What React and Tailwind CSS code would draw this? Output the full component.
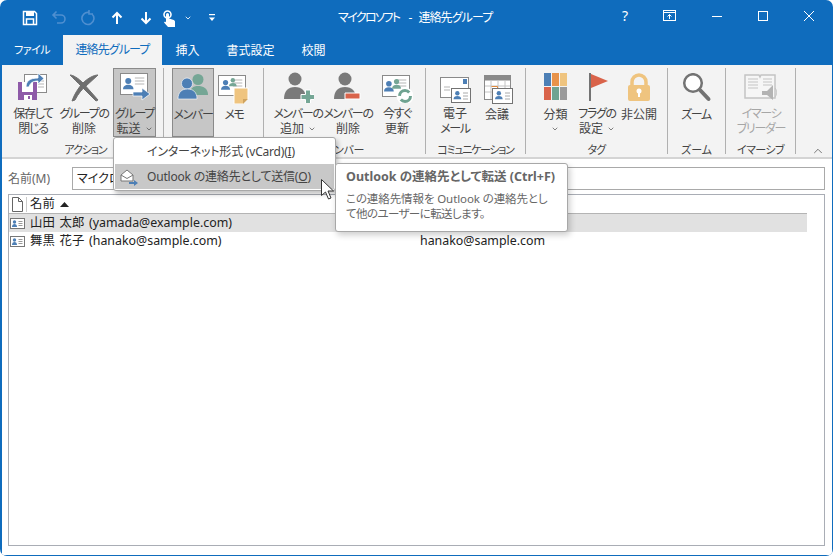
import { ChevronDown, ChevronUp } from 'lucide-react';

const FONT = "[font-family:'Noto_Sans','Noto_Sans_CJK_JP',sans-serif] [font-feature-settings:'palt']";
const KANJI_ONLY = /^[\u4e00-\u9fff]+$/;

function Person({ x, y, s = 1, fill = '#4d7fb5' }) {
  return (
    <g transform={`translate(${x} ${y}) scale(${s})`} fill={fill}>
      <circle cx="7" cy="4" r="4" />
      <path d="M0 15c0-4 3-6 7-6s7 2 7 6z" />
    </g>
  );
}

function SaveCloseIcon() {
  return (
    <svg width="32" height="30" viewBox="0 0 32 30">
      <rect x="7.500" y="1.500" width="22" height="18" fill="#fff" stroke="#8a8a8a" />
      <path d="M21 8h6M21 11h6M21 14h6" stroke="#b5b5b5" />
      <path d="M1 9h19v18H1z" fill="#8e5aa8" />
      <rect x="5" y="9" width="11" height="10" fill="#fff" />
      <rect x="7" y="22" width="8" height="5" fill="#fff" />
      <rect x="11" y="23" width="2" height="3" fill="#8e5aa8" />
      <path d="M9 14c0-6 4-9 12-9V0l6 5.500-6 5.500V8c-5 0-8 2-9 6z" fill="#4d7fb5" stroke="#fff" strokeWidth=".8" />
    </svg>
  );
}

function DeleteIcon() {
  return (
    <svg width="32" height="30" viewBox="0 0 32 30">
      <path d="M2 2c3 0 8 3 13 8l15 17-2 1-14-14C9 9 5 5 2 2z" fill="#6e6e6e" stroke="#6e6e6e" />
      <path d="M30 2c-4 0-10 3-15 8C10 15 6 22 4 28l3-1c3-6 7-11 11-14 4-4 8-7 12-11z" fill="#6e6e6e" stroke="#6e6e6e" />
    </svg>
  );
}

function Card({ x = 0, y = 0, w = 26, h = 21 }) {
  return (
    <g transform={`translate(${x} ${y})`}>
      <rect x=".5" y=".5" width={w} height={h} fill="#fff" stroke="#8a8a8a" />
      <path d={`M${w * 0.55} 5h${w * 0.35}M${w * 0.55} 8h${w * 0.35}M${w * 0.55} 11h${w * 0.35}`} stroke="#b5b5b5" />
    </g>
  );
}

function ForwardIcon() {
  return (
    <svg width="32" height="31" viewBox="0 0 32 31">
      <Card x="1" y="1" w="27" h="21" />
      <Person x="4" y="6" s="0.75" />
      <path d="M14 20h9v-4l8 6-8 6v-4h-9z" fill="#4d7fb5" stroke="#fff" strokeWidth=".7" />
    </svg>
  );
}

function MembersIcon() {
  return (
    <svg width="32" height="30" viewBox="0 0 32 30">
      <circle cx="21" cy="6.500" r="5.500" fill="#75a695" />
      <path d="M13 22c0-7 3-9 8-9s10 2 10 9z" fill="#75a695" />
      <circle cx="10" cy="10.500" r="5.500" fill="#4d7fb5" stroke="#fff" strokeWidth=".6" />
      <path d="M1 26c0-7 4-10 9.500-10S20 19 20 26z" fill="#4d7fb5" stroke="#fff" strokeWidth=".6" />
    </svg>
  );
}

function MemoIcon() {
  return (
    <svg width="32" height="31" viewBox="0 0 32 31">
      <Card x="0" y="2" w="27" h="20" />
      <Person x="3" y="7" s="0.65" />
      <Person x="11" y="5" s="0.55" fill="#75a695" />
      <path d="M16 15h14v11l-5 5h-9z" fill="#efc47f" stroke="#fff" />
      <path d="M25 31v-5h5z" fill="#cfa35f" />
    </svg>
  );
}

function MemberEditIcon({ minus }) {
  return (
    <svg width="32" height="31" viewBox="0 0 32 31">
      <circle cx="13" cy="7" r="6.500" fill="#7a7a7a" />
      <path d="M2 27c0-8 4-12 11-12s11 4 11 12z" fill="#7a7a7a" />
      {minus ? (
        <path d="M13 21h15v6H13z" fill="#d9634a" stroke="#fff" />
      ) : (
        <path d="M23.500 18h5v4.500H33v5h-4.500V32h-5v-4.500H19v-5h4.500z" fill="#75a695" stroke="#fff" />
      )}
    </svg>
  );
}

function RefreshIcon() {
  return (
    <svg width="32" height="30" viewBox="0 0 32 30">
      <Card x="1" y="2" w="27" h="21" />
      <Person x="3" y="8" s="0.7" />
      <Person x="11" y="6" s="0.65" fill="#75a695" />
      <circle cx="24" cy="23" r="8.500" fill="#fff" />
      <circle cx="24" cy="23" r="5.500" fill="none" stroke="#6fa391" strokeWidth="3" strokeDasharray="13 4" />
    </svg>
  );
}

function MailCardIcon() {
  return (
    <svg width="33" height="31" viewBox="0 0 33 31">
      <rect x="1.500" y="5.500" width="28" height="20" fill="#fff" stroke="#8a8a8a" />
      <rect x="24" y="7" width="4" height="5" fill="#4d7fb5" />
      <path d="M5 15h6M5 18h6" stroke="#b5b5b5" />
      <rect x="12.500" y="16.500" width="19" height="14" fill="#fff" stroke="#737373" />
      <Person x="14.500" y="19" s="0.55" />
      <path d="M24 21h5M24 24h5M24 27h5" stroke="#aaa" />
    </svg>
  );
}

function MeetingCardIcon() {
  return (
    <svg width="32" height="31" viewBox="0 0 32 31">
      <rect x="3.500" y="2.500" width="26" height="24" fill="#fff" stroke="#8a8a8a" />
      <rect x="3.500" y="2.500" width="26" height="5" fill="#8a8a8a" />
      <path d="M10 7v19M17 7v19M24 7v19M4 13h25M4 19h25" stroke="#c4c4c4" />
      <path d="M10.500 13.500h6v6" fill="none" stroke="#e08b3e" />
      <rect x="11.500" y="15.500" width="20" height="15" fill="#fff" stroke="#737373" />
      <Person x="14" y="18" s="0.55" />
      <path d="M24 20h5M24 23h5M24 26h5" stroke="#aaa" />
    </svg>
  );
}

function CategoryIcon() {
  const colors = ['#4d7fb5', '#e8934a', '#efc47f', '#d9634a', '#6fa391', '#9a9a9a'];
  return (
    <div className="mb-[3px] grid w-[23px] grid-cols-3 gap-[1px]">
      {colors.map((c) => (
        <div key={c} className="h-[13px]" style={{ background: c }} />
      ))}
    </div>
  );
}

function FlagIcon() {
  return (
    <svg width="32" height="30" viewBox="0 0 32 30">
      <rect x="8" y="0" width="2" height="28" fill="#737373" />
      <path d="M10 1l17 7-17 7z" fill="#d9634a" />
    </svg>
  );
}

function LockIcon() {
  return (
    <svg width="32" height="30" viewBox="0 0 32 30">
      <path d="M9 13V9a7 7 0 0 1 14 0v4" fill="none" stroke="#efc47f" strokeWidth="3.500" />
      <rect x="5" y="12" width="22" height="16" rx="2" fill="#efc47f" />
      <circle cx="16" cy="18" r="2.500" fill="#fff" />
      <rect x="15" y="18" width="2" height="6" fill="#fff" />
    </svg>
  );
}

function ZoomIcon() {
  return (
    <svg width="32" height="30" viewBox="0 0 32 30">
      <circle cx="13" cy="10" r="8.800" fill="#fff" stroke="#737373" strokeWidth="2.500" />
      <path d="M20 17l8.500 9" stroke="#737373" strokeWidth="4" strokeLinecap="round" />
    </svg>
  );
}

function ReaderIcon() {
  return (
    <svg width="34" height="30" viewBox="0 0 34 30">
      <path d="M1 2h14l1 2 1-2h14v23H1z" fill="#f6f6f6" stroke="#c4c4c4" strokeWidth="1.500" />
      <path d="M4 6h10M4 9h10M4 12h10M4 15h10M19 6h9M19 9h9M19 12h9" stroke="#c4c4c4" />
      <path d="M18 18h5l6-6v15l-6-5h-5z" fill="#b3b3b3" />
      <path d="M31 15c2 2 2 7 0 9" fill="none" stroke="#c4c4c4" />
    </svg>
  );
}

function RibbonButton({ width, ml = 0, active, icon, lines, chevron, disabled }) {
  return (
    <div
      className={`flex h-[69px] flex-none flex-col items-center pt-[3px] text-[12px] leading-[15px] ${
        active ? 'border border-[#8a8a8a] bg-[#c6c6c6]' : 'border border-transparent'
      } ${disabled ? 'text-[#a6a6a6]' : 'text-[#444]'}`}
      style={{ width, marginLeft: ml }}
    >
      <div className="flex h-[32px] items-center justify-center">{icon}</div>
      <div className="mt-[3px] flex flex-col items-center whitespace-nowrap">
        {lines.map((line, i) => (
          <span key={line} className={`flex items-center ${KANJI_ONLY.test(line) ? '' : 'tracking-[-1.3px]'}`}>
            {line}
            {chevron && lines.length > 1 && i === lines.length - 1 && <ChevronDown size={8} className="ml-[4px]" />}
          </span>
        ))}
        {chevron && lines.length === 1 && <ChevronDown size={8} className="mt-[3px]" />}
      </div>
    </div>
  );
}

function RibbonGroup({ width, label, pl = 0, tracking = -0.8, children }) {
  return (
    <div className="flex h-[86px] flex-none flex-col border-r border-[#b0b0b0]" style={{ width }}>
      <div className="flex h-[69px]" style={{ paddingLeft: pl }}>
        {children}
      </div>
      <div
        className="flex h-[17px] justify-center whitespace-nowrap pt-[5px] text-[11px] leading-[16px] text-[#444]"
        style={{ letterSpacing: tracking }}
      >
        {label}
      </div>
    </div>
  );
}

function TitleIcons() {
  return (
    <div className="flex w-[338px] flex-none items-center pl-[22px]">
      <svg width="16" height="16" viewBox="0 0 16 16" fill="none" className="mr-[13px]">
        <path d="M1.500 1.500h11l2 2v11h-13z" stroke="#fff" strokeWidth="1.500" />
        <path d="M4 2v4h8V2z" fill="#fff" />
        <path d="M4.500 14v-5h7v5" stroke="#fff" strokeWidth="1.500" />
      </svg>
      <svg width="16" height="16" viewBox="0 0 16 16" fill="none" className="mr-[13px]">
        <path d="M2 5h8a4 4 0 0 1 0 8H6M5.500 1.500L2 5l3.500 3.500" stroke="#4f8fd0" strokeWidth="1.600" />
      </svg>
      <svg width="16" height="16" viewBox="0 0 16 16" fill="none" className="mr-[14px]">
        <path d="M12 4a6 6 0 1 1-3-1.500M9 0v4h4" stroke="#4f8fd0" strokeWidth="1.600" />
      </svg>
      <svg width="14" height="14" viewBox="0 0 14 14" fill="none" className="mr-[15px]">
        <path d="M7 13V2M2.500 6.500L7 2l4.500 4.500" stroke="#fff" strokeWidth="2" />
      </svg>
      <svg width="14" height="14" viewBox="0 0 14 14" fill="none" className="mr-[10px]">
        <path d="M7 1v11M2.500 7.500L7 12l4.500-4.500" stroke="#fff" strokeWidth="2" />
      </svg>
      <svg width="12" height="17" viewBox="0 0 12 17" className="mr-[9px]">
        <circle cx="4.500" cy="4.500" r="3.500" fill="none" stroke="#fff" strokeWidth="1.600" />
        <path d="M3 4.500a1.500 1.500 0 0 1 3 0v4l4 1.200c1 .3 2 1 2 2V17H5L1 12.500l1-1 1 .7z" fill="#fff" />
      </svg>
      <ChevronDown size={8} color="#fff" strokeWidth={2.500} className="mr-[16px]" />
      <svg width="8" height="8" viewBox="0 0 8 8" fill="#fff">
        <rect x="1" y="0" width="6" height="1.200" />
        <path d="M1 3.500h6L4 7z" />
      </svg>
    </div>
  );
}

function WindowControls() {
  return (
    <div className="-mt-[4px] flex flex-1 items-center justify-end text-white">
      <span className="mr-[35px] text-[14px] leading-none">?</span>
      <svg width="14" height="12" viewBox="0 0 14 12" fill="none" stroke="#fff" className="mr-[35px]">
        <rect x=".5" y=".5" width="12" height="10" />
        <path d="M.5 2.500h12" />
        <path d="M6.500 9V4.500M4.500 6.500l2-2 2 2" />
      </svg>
      <svg width="10" height="10" viewBox="0 0 10 10" stroke="#fff" className="mr-[36px]">
        <path d="M0 5.500h10" />
      </svg>
      <svg width="10" height="10" viewBox="0 0 10 10" fill="none" stroke="#fff" className="mr-[36px]">
        <rect x=".5" y=".5" width="9" height="9" />
      </svg>
      <svg width="10" height="10" viewBox="0 0 10 10" stroke="#fff" className="mr-[19px]">
        <path d="M0 0l10 10M10 0L0 10" />
      </svg>
    </div>
  );
}

function ContactIcon() {
  return (
    <svg width="15" height="11" viewBox="0 0 15 11" className="mr-[5px] flex-none">
      <rect x=".5" y=".5" width="14" height="10" fill="#fff" stroke="#777" />
      <circle cx="4.500" cy="4" r="1.700" fill="#4d7fb5" />
      <path d="M2 9c0-2 1-3 2.500-3S7 7 7 9z" fill="#4d7fb5" />
      <path d="M8.500 3.500h4M8.500 5.500h4M8.500 7.500h4" stroke="#999" />
    </svg>
  );
}

function MenuAndTooltip() {
  return (
    <>
      <div className="absolute left-[113px] top-[137px] w-[223px] rounded-[3px] border border-[#a8a8a8] bg-white p-[1px] text-[12px] tracking-[-0.2px] text-[#444] shadow-[2px_3px_5px_rgba(0,0,0,0.25)]">
        <div className="flex h-[25px] items-center pl-[32px]">
          インターネット形式 (vCard)(<span className="underline">I</span>)
        </div>
        <div className="flex h-[25px] items-center bg-[#c8c8c8]">
          <svg width="20" height="18" viewBox="0 0 20 18" fill="none" className="ml-[4px] mr-[8px]">
            <path d="M2 7l6-5 6 5v6H2z" fill="#fff" stroke="#777" />
            <path d="M2 7l6 3.500L14 7" stroke="#777" />
            <path d="M10 14h5v-2l4 3-4 3v-2h-5z" fill="#4d7fb5" />
          </svg>
          Outlook の連絡先として送信(<span className="underline">O</span>)
        </div>
      </div>
      <div className="absolute left-[335px] top-[163px] h-[69px] w-[233px] rounded-[3px] border border-[#a8a8a8] bg-white pl-[10px] pt-[4px] text-[#666] shadow-[2px_3px_6px_rgba(0,0,0,0.2)]">
        <div className="whitespace-nowrap text-[12.5px] font-bold leading-[18px]">Outlook の連絡先として転送 (Ctrl+F)</div>
        <div className="mt-[5px] whitespace-nowrap text-[11.5px] leading-[15px]">
          <div className="tracking-[-0.1px]">この連絡先情報を Outlook の連絡先とし</div>
          <div className="tracking-[-0.6px]">て他のユーザーに転送します。</div>
        </div>
      </div>
      <svg width="14" height="21" viewBox="0 0 14 21" className="absolute left-[321px] top-[179px]">
        <path d="M.5.5v16l4-3.500 3 7 2.500-1-3-7h5.500z" fill="#fff" stroke="#333" />
      </svg>
    </>
  );
}

export default function App() {
  return (
    <div className={`relative flex h-[556px] w-[833px] flex-col overflow-hidden rounded-[7px] bg-[#0f6cbd] ${FONT}`}>
      <div className="flex h-[36px] flex-none items-center">
        <TitleIcons />
        <div className="flex whitespace-nowrap text-[12px] text-white">
          <span className="tracking-[-1.6px]">マイクロソフト</span>
          <span className="ml-[9px] mr-[6px]">-</span>
          <span className="tracking-[-0.9px]">連絡先グループ</span>
        </div>
        <WindowControls />
      </div>

      <div className="flex h-[29px] flex-none items-stretch pl-[1px] text-[12px] text-white">
        <div className="flex w-[62px] items-center justify-center text-[11px] tracking-[-0.5px]">ファイル</div>
        <div className="-mt-[1px] flex w-[99px] items-center justify-center bg-[#f3f3f3] tracking-[-0.9px] text-[#0f6cbd]">連絡先グループ</div>
        <div className="flex w-[51px] items-center justify-center">挿入</div>
        <div className="flex w-[75px] items-center justify-center">書式設定</div>
        <div className="flex w-[51px] items-center justify-center">校閲</div>
      </div>

      <div className="ml-[2px] mr-[1px] flex min-h-0 flex-1 flex-col bg-white">
        <div className="relative flex h-[94px] flex-none border-b-2 border-[#d4d4d4] bg-[#f3f3f3] pl-[6px] pt-[3px]">
          <RibbonGroup width={156} label="アクション" tracking={-1.1}>
            <RibbonButton width={50} icon={<SaveCloseIcon />} lines={['保存して', '閉じる']} />
            <RibbonButton width={52} icon={<DeleteIcon />} lines={['グループの', '削除']} />
            <RibbonButton width={43} ml={3} active icon={<ForwardIcon />} lines={['グループ', '転送']} chevron />
          </RibbonGroup>
          <RibbonGroup width={100} label="" pl={8}>
            <RibbonButton width={42} active icon={<MembersIcon />} lines={['メンバー']} />
            <RibbonButton width={40} icon={<MemoIcon />} lines={['メモ']} />
          </RibbonGroup>
          <RibbonGroup width={162} label="メンバー" tracking={-0.4} pl={9}>
            <RibbonButton width={50} icon={<MemberEditIcon />} lines={['メンバーの', '追加']} chevron />
            <RibbonButton width={50} icon={<MemberEditIcon minus />} lines={['メンバーの', '削除']} />
            <RibbonButton width={48} icon={<RefreshIcon />} lines={['今すぐ', '更新']} />
          </RibbonGroup>
          <RibbonGroup width={100} label="コミュニケーション" tracking={-1.3} pl={8}>
            <RibbonButton width={42} icon={<MailCardIcon />} lines={['電子', 'メール']} />
            <RibbonButton width={42} icon={<MeetingCardIcon />} lines={['会議']} />
          </RibbonGroup>
          <RibbonGroup width={142} label="タグ" pl={9}>
            <RibbonButton width={41} icon={<CategoryIcon />} lines={['分類']} chevron />
            <RibbonButton width={42} icon={<FlagIcon />} lines={['フラグの', '設定']} chevron />
            <RibbonButton width={42} icon={<LockIcon />} lines={['非公開']} />
          </RibbonGroup>
          <RibbonGroup width={58} label="ズーム" tracking={-0.1} pl={6}>
            <RibbonButton width={44} icon={<ZoomIcon />} lines={['ズーム']} />
          </RibbonGroup>
          <RibbonGroup width={70} label="イマーシブ" tracking={-0.6} pl={6}>
            <RibbonButton width={58} disabled icon={<ReaderIcon />} lines={['イマーシ', 'ブリーダー']} />
          </RibbonGroup>
          <ChevronUp size={14} strokeWidth={1.200} color="#444" className="absolute -bottom-[1px] right-[7px]" />
        </div>

        <div className="flex min-h-0 flex-1 flex-col pb-[9px] pl-[6px] pr-[7px] pt-[8px]">
          <div className="flex h-[23px] flex-none items-center text-[12px]">
            <span className="w-[64px] text-[#666]">名前(M)</span>
            <div className="flex h-[23px] flex-1 items-center border border-[#a9a9a9] pl-[4px] text-[#222]">マイクロソフト</div>
          </div>
          <div className="mt-[4px] min-h-0 flex-1 border border-[#a9adb5] text-[12.4px] text-[#222] [word-spacing:1.5px]">
            <div className="flex h-[18px] items-center pl-[3px]">
              <svg width="11" height="15" viewBox="0 0 11 15" fill="none" stroke="#666" className="mr-[3px]">
                <path d="M.5.5h6l4 4v10H.5zM6.500.5v4h4" fill="#fff" />
              </svg>
              <span className="mr-[3px] h-[15px] border-l border-[#ccc]" />
              <span>名前</span>
              <svg width="9" height="5" viewBox="0 0 9 5" className="ml-[5px]">
                <path d="M0 5l4.500-5L9 5z" fill="#222" />
              </svg>
            </div>
            <div className="mr-[17px] flex h-[19px] items-center border-t border-[#b4b4b4] bg-[#e1e1e1] pl-[1px]">
              <ContactIcon />山田 太郎 (yamada@example.com)
            </div>
            <div className="flex h-[19px] items-center pl-[1px]">
              <ContactIcon />
              <span className="w-[390px] flex-none">舞黒 花子 (hanako@sample.com)</span>
              <span>hanako@sample.com</span>
            </div>
          </div>
        </div>
      </div>
      <div className="h-[1px] flex-none" />
      <MenuAndTooltip />
    </div>
  );
}
